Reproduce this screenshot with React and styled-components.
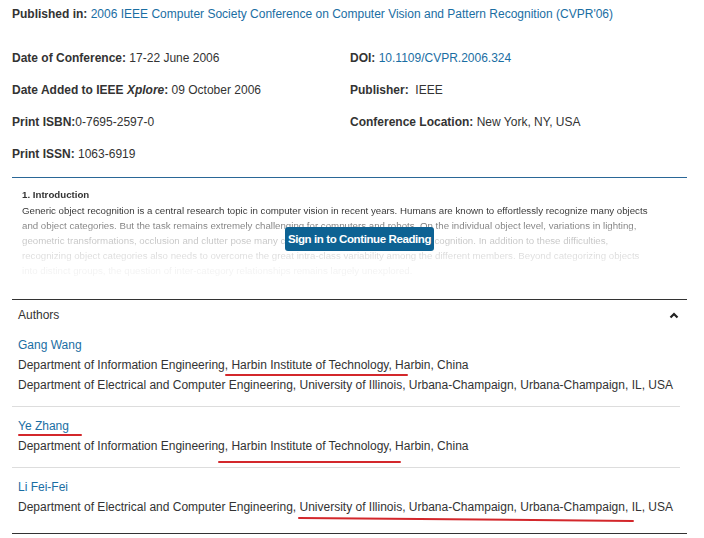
import React from "react";
import styled, { createGlobalStyle } from "styled-components";

const GlobalStyle = createGlobalStyle`
  body {
    margin: 0;
    background: #ffffff;
    font-family: "Liberation Sans", Arial, sans-serif;
    color: #333333;
  }
`;

const Page = styled.div`
  width: 704px;
  height: 538px;
  overflow: hidden;
  padding: 7px 17px 0 12px;
  box-sizing: border-box;
  font-size: 12px;
`;

const Line = styled.div`
  line-height: 14px;
`;

const Label = styled.b`
  font-weight: bold;
`;

const Link = styled.span`
  color: #1a6ea3;
`;

const MetaGrid = styled.div`
  display: grid;
  grid-template-columns: 338px 1fr;
  row-gap: 16px;
  margin-top: 29px;
  line-height: 16px;
`;

const Divider = styled.div`
  height: 1px;
  background: ${(p) => p.$color};
  margin-top: ${(p) => p.$top || 0}px;
  margin-right: ${(p) => p.$inset || 0}px;
`;

const Abstract = styled.div`
  position: relative;
  height: 121px;
`;

const AbstractText = styled.div`
  padding: 9px 20px 0 10px;
  font-size: 9.7px;
  line-height: 15px;
  color: #333333;
  white-space: nowrap;
  -webkit-mask-image: linear-gradient(to bottom, #000 32%, rgba(0,0,0,0.3) 60%, rgba(0,0,0,0.06) 92%);
  mask-image: linear-gradient(to bottom, #000 32%, rgba(0,0,0,0.3) 60%, rgba(0,0,0,0.06) 92%);
`;

const Heading = styled.div`
  font-weight: bold;
  margin-bottom: 1px;
`;

const SignIn = styled.button`
  position: absolute;
  left: 273px;
  top: 49px;
  width: 149px;
  height: 24px;
  border: none;
  border-radius: 3px;
  background: #0d6293;
  color: #ffffff;
  font-family: "Liberation Sans", Arial, sans-serif;
  font-weight: bold;
  font-size: 11.5px;
  letter-spacing: -0.4px;
  padding: 0;
`;

const Authors = styled.section`
  border-top: 1px solid #333333;
  border-bottom: 1px solid #333333;
`;

const Header = styled.div`
  display: flex;
  justify-content: space-between;
  align-items: center;
  padding: 5px 8px 1px 6px;
  line-height: 20px;
`;

const Author = styled.div`
  padding: 9px 0 ${(p) => (p.$last ? 16 : 11)}px 6px;
  line-height: 20px;
`;

const Name = styled.div`
  position: relative;
  color: #1a6ea3;
`;

const Affil = styled.div`
  position: relative;
  white-space: nowrap;
`;

const Scribble = styled.span`
  position: absolute;
  left: ${(p) => p.$left}px;
  top: ${(p) => p.$top}px;
  width: ${(p) => p.$width}px;
  height: 2px;
  border-radius: 1px;
  background: #d3272b;
  transform: rotate(${(p) => p.$tilt || 0}deg);
  transform-origin: left center;
`;

const Chevron = () => (
  <svg width="10" height="7" viewBox="0 0 10 7">
    <polyline points="1.5,5.5 5,2 8.5,5.5" fill="none" stroke="#222" strokeWidth="2.2" />
  </svg>
);

const abstractLines = [
  "Generic object recognition is a central research topic in computer vision in recent years. Humans are known to effortlessly recognize many objects",
  "and object categories. But the task remains extremely challenging for computers and robots. On the individual object level, variations in lighting,",
  "geometric transformations, occlusion and clutter pose many challenges for reliable and robust recognition. In addition to these difficulties,",
  "recognizing object categories also needs to overcome the great intra-class variability among the different members. Beyond categorizing objects",
  "into distinct groups, the question of inter-category relationships remains largely unexplored.",
];

export default function App() {
  return (
    <Page>
      <GlobalStyle />
      <Line>
        <Label>Published in: </Label>
        <Link>2006 IEEE Computer Society Conference on Computer Vision and Pattern Recognition (CVPR'06)</Link>
      </Line>

      <MetaGrid>
        <div><Label>Date of Conference: </Label>17-22 June 2006</div>
        <div><Label>DOI: </Label><Link>10.1109/CVPR.2006.324</Link></div>
        <div><Label>Date Added to IEEE <i>Xplore</i>: </Label>09 October 2006</div>
        <div><Label>Publisher: </Label>&nbsp;IEEE</div>
        <div><Label>Print ISBN:</Label>0-7695-2597-0</div>
        <div><Label>Conference Location: </Label>New York, NY, USA</div>
        <div><Label>Print ISSN: </Label>1063-6919</div>
      </MetaGrid>

      <Divider $color="#2a6797" $top={15} />

      <Abstract>
        <AbstractText>
          <Heading>1. Introduction</Heading>
          {abstractLines.map((l) => (
            <div key={l}>{l}</div>
          ))}
        </AbstractText>
        <SignIn>Sign in to Continue Reading</SignIn>
      </Abstract>

      <Authors>
        <Header>
          <span>Authors</span>
          <Chevron />
        </Header>
        <Author>
          <Name>Gang Wang</Name>
          <Affil>
            Department of Information Engineering, Harbin Institute of Technology, Harbin, China
            <Scribble $left={207} $top={19} $width={183} />
          </Affil>
          <Affil>Department of Electrical and Computer Engineering, University of Illinois, Urbana-Champaign, Urbana-Champaign, IL, USA</Affil>
        </Author>
        <Divider $color="#dddddd" $inset={7} />
        <Author>
          <Name>
            Ye Zhang
            <Scribble $left={0} $top={18} $width={64} />
          </Name>
          <Affil>
            Department of Information Engineering, Harbin Institute of Technology, Harbin, China
            <Scribble $left={200} $top={25} $width={183} />
          </Affil>
        </Author>
        <Divider $color="#dddddd" $inset={7} />
        <Author $last>
          <Name>Li Fei-Fei</Name>
          <Affil>
            Department of Electrical and Computer Engineering, University of Illinois, Urbana-Champaign, Urbana-Champaign, IL, USA
            <Scribble $left={280} $top={20} $width={336} $tilt={0.5} />
          </Affil>
        </Author>
      </Authors>
    </Page>
  );
}
